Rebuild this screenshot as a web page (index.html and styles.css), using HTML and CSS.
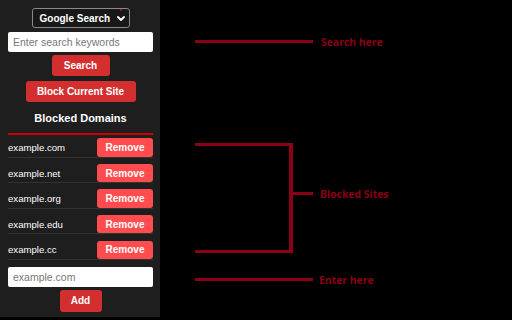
FILE: index.html
```html
<!DOCTYPE html>
<html>
<head>
<meta charset="utf-8">
<link rel="stylesheet" href="styles.css">
</head>
<body>
<div class="screen">
  <div class="panel">
    <div class="select">
      <span class="select-label">Google Search</span>
      <svg class="chev" width="8" height="5" viewBox="0 0 8 5"><path d="M1 1 L4 4 L7 1" fill="none" stroke="#fff" stroke-width="1.8" stroke-linecap="round" stroke-linejoin="round"/></svg>
      <span class="badge"></span>
    </div>
    <div class="input search-input"><span class="placeholder">Enter search keywords</span></div>
    <button class="btn btn-search">Search</button>
    <button class="btn btn-block">Block Current Site</button>
    <div class="heading">Blocked Domains</div>
    <ul class="list">
      <li class="row"><span class="domain">example.com</span><button class="remove">Remove</button></li>
      <li class="row"><span class="domain">example.net</span><button class="remove">Remove</button></li>
      <li class="row"><span class="domain">example.org</span><button class="remove">Remove</button></li>
      <li class="row"><span class="domain">example.edu</span><button class="remove">Remove</button></li>
      <li class="row"><span class="domain">example.cc</span><button class="remove">Remove</button></li>
    </ul>
    <div class="input add-input"><span class="placeholder">example.com</span></div>
    <button class="btn btn-add">Add</button>
  </div>
  <div class="canvas">
    <div class="callout callout-search">
      <span class="line"></span><span class="label">Search here</span>
    </div>
    <div class="bracket"></div>
    <div class="callout callout-blocked">
      <span class="tick"></span><span class="label">Blocked Sites</span>
    </div>
    <div class="callout callout-enter">
      <span class="line"></span><span class="label">Enter here</span>
    </div>
  </div>
</div>
</body>
</html>
```
FILE: styles.css
```css
* { box-sizing: border-box; }
html, body { margin: 0; padding: 0; background: #000; }
body { width: 512px; height: 320px; overflow: hidden; font-family: "Liberation Sans", Arial, sans-serif; }

.screen { display: flex; width: 512px; height: 320px; }

.panel {
  width: 160px;
  height: 317px;
  background: #1e1e1e;
  padding: 8px 7px 0 8px;
  display: flex;
  flex-direction: column;
  align-items: center;
}

.select {
  position: relative;
  width: 98px;
  height: 20px;
  border: 1px solid #8a8a8a;
  border-radius: 3px;
  background: #181818;
  display: flex;
  align-items: center;
  padding-left: 7px;
  gap: 7px;
}
.select-label { color: #fff; font-weight: bold; font-size: 10px; }
.chev { display: block; }
.badge {
  position: absolute;
  top: 0px;
  right: 7px;
  width: 2px;
  height: 2px;
  background: #e00;
  border-radius: 1px;
}

.input {
  width: 100%;
  background: #fff;
  border-radius: 2px;
  display: flex;
  align-items: center;
  padding-left: 5px;
}
.placeholder { color: #777; font-size: 10.5px; }
.search-input { height: 20px; margin-top: 4px; }

.btn {
  border: none;
  background: #d32f2f;
  color: #fff;
  font-family: "Liberation Sans", Arial, sans-serif;
  font-weight: bold;
  font-size: 10px;
  border-radius: 3px;
  height: 21px;
  padding: 0;
}
.btn-search { width: 58px; margin-top: 3px; }
.btn-block { width: 110px; margin-top: 4.5px; }

.heading {
  width: 100%;
  text-align: center;
  color: #fff;
  font-weight: bold;
  font-size: 11px;
  line-height: 14px;
  margin-top: 9.5px;
  padding-bottom: 8px;
  border-bottom: 2px solid #cc0000;
}

.list {
  list-style: none;
  margin: 3.3px 0 0 0;
  padding: 0;
  width: 100%;
  display: flex;
  flex-direction: column;
  gap: 6.3px;
}
.row {
  display: flex;
  align-items: center;
  justify-content: space-between;
  border-bottom: 1px solid #333;
}
.domain { color: #fff; font-size: 9.6px; }
.remove {
  border: none;
  background: #ff4d4f;
  color: #fff;
  font-family: "Liberation Sans", Arial, sans-serif;
  font-weight: bold;
  font-size: 10px;
  width: 56px;
  height: 18.3px;
  border-radius: 3px;
  padding: 0;
}

.add-input { height: 19.5px; margin-top: 7.5px; }
.btn-add { width: 42px; height: 21.7px; margin-top: 3px; }

.canvas { position: relative; flex: 1; height: 320px; }

.callout { position: absolute; display: flex; align-items: center; }
.line { display: block; width: 118px; height: 3px; background: #8b0014; }
.tick { display: block; width: 21px; height: 3px; background: #8b0014; }
.label {
  color: #8b0014;
  font-family: "Open Sans", sans-serif;
  font-weight: 700;
  font-size: 10.4px;
  line-height: 12px;
}
.callout-search { left: 35px; top: 35.5px; gap: 8px; }
.callout-enter { left: 35px; top: 273.5px; gap: 6px; }
.callout-blocked { left: 132px; top: 187.5px; gap: 7px; }

.bracket {
  position: absolute;
  left: 35px;
  top: 143px;
  width: 98px;
  height: 110px;
  border: 3px solid #8b0014;
  border-left: none;
  border-right-width: 4px;
}
```
